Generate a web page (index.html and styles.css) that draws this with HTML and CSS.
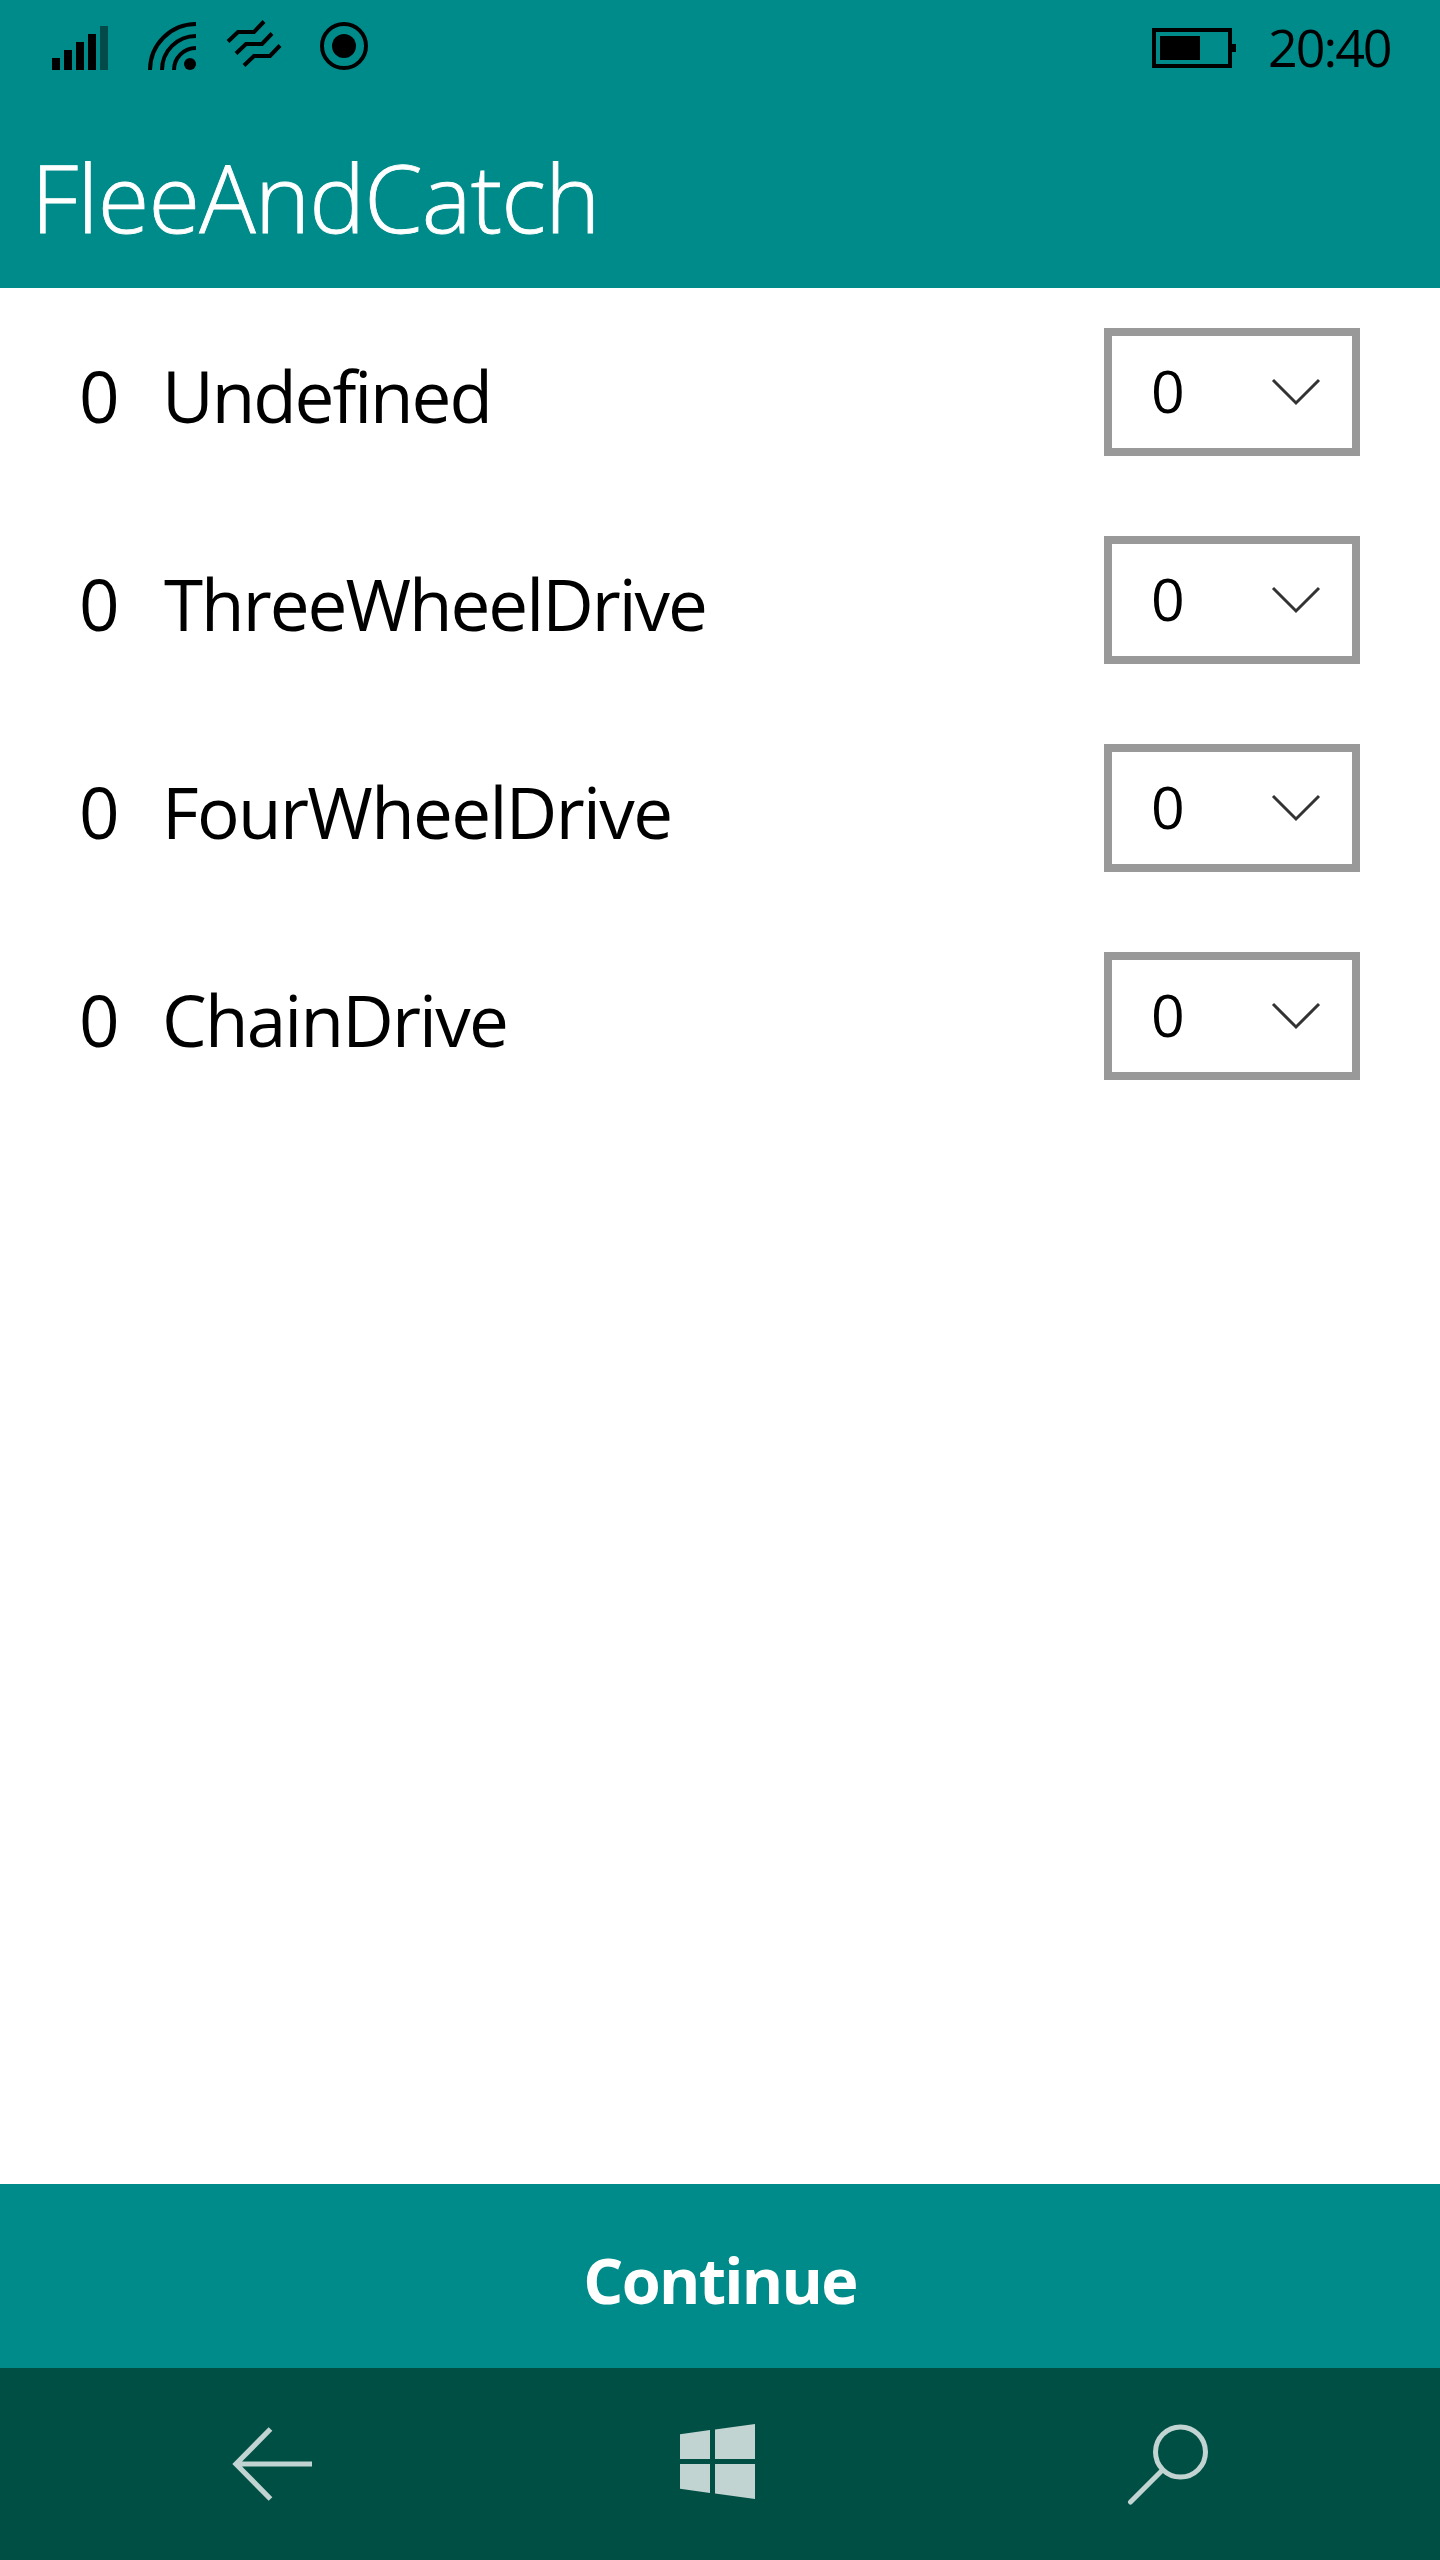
FILE: index.html
```html
<!DOCTYPE html>
<html lang="en">
<head>
<meta charset="utf-8">
<title>FleeAndCatch</title>
<link rel="stylesheet" href="styles.css">
</head>
<body>
<div class="screen">
  <header class="header">
    <div class="status">
      <svg class="signal" width="56" height="44" viewBox="0 0 56 44"><path d="M0 32h8v12H0zM12 24h8v20h-8zM24 16h8v28h-8zM36 8h8v36h-8z"/><path class="dim" d="M48 0h8v44h-8z"/></svg>
      <svg class="wifi" width="48" height="48" viewBox="0 0 48 48"><path class="line" d="M2 48A46 46 0 0 1 48 2M14 48A34 34 0 0 1 48 14M26 48A22 22 0 0 1 48 26"/><circle cx="42" cy="42" r="6"/></svg>
      <svg class="vibrate" width="56" height="48" viewBox="0 0 56 48"><path class="line" d="M2 20.500L12 11H28L38 0.500M10 32.500L20 23H36L46 12.500M18 44.500L28 35H44L54 24.500"/></svg>
      <svg class="record" width="48" height="48" viewBox="0 0 48 48"><circle class="line" cx="24" cy="24" r="22"/><circle cx="24" cy="24" r="12"/></svg>
      <svg class="battery" width="84" height="40" viewBox="0 0 84 40"><path class="line" d="M2 2h76v36H2z"/><path d="M8 8h40v24H8zM80 16h4v8h-4z"/></svg>
      <span class="clock">20:40</span>
    </div>
    <h1 class="title">FleeAndCatch</h1>
  </header>
  <main class="list">
    <div class="row"><span class="count">0</span><span class="name">Undefined</span><button class="select"><span>0</span><svg width="50" height="30" viewBox="0 0 50 30"><path d="M2 2L25 25L48 2"/></svg></button></div>
    <div class="row"><span class="count">0</span><span class="name three">ThreeWheelDrive</span><button class="select"><span>0</span><svg width="50" height="30" viewBox="0 0 50 30"><path d="M2 2L25 25L48 2"/></svg></button></div>
    <div class="row"><span class="count">0</span><span class="name four">FourWheelDrive</span><button class="select"><span>0</span><svg width="50" height="30" viewBox="0 0 50 30"><path d="M2 2L25 25L48 2"/></svg></button></div>
    <div class="row"><span class="count">0</span><span class="name chain">ChainDrive</span><button class="select"><span>0</span><svg width="50" height="30" viewBox="0 0 50 30"><path d="M2 2L25 25L48 2"/></svg></button></div>
  </main>
  <button class="continue">Continue</button>
  <nav class="nav">
    <svg class="back" width="80" height="80" viewBox="0 0 80 80"><path d="M80 40H5M38.500 5L4 40L38.500 75"/></svg>
    <svg class="home" width="75" height="76" viewBox="0 0 75 76"><path d="M0 10.300L30 6V35H0zM35 5.500L75 0V35H35zM0 40H30V69L0 64.700zM35 40H75V75L35 69.500z"/></svg>
    <svg class="search" width="82" height="82" viewBox="0 0 82 82"><circle cx="53.500" cy="28" r="25"/><path d="M35.500 46L3.500 78"/></svg>
  </nav>
</div>
</body>
</html>
```
FILE: styles.css
```css
* { box-sizing: border-box; }
body { margin: 0; font-family: "Open Sans", "Noto Sans", sans-serif; background: #fff; color: #000; }
svg { display: block; flex: none; }
button { margin: 0; border: 0; border-radius: 0; font-family: inherit; color: inherit; }

.screen { display: flex; flex-direction: column; width: 1440px; height: 2560px; }

.header { height: 288px; background: #008b8b; }
.status { display: flex; align-items: flex-start; height: 133px; padding-left: 52px; }
.status .line { fill: none; stroke: #000; stroke-width: 4; }
.status .dim { fill: #044a4a; }
.signal { margin-top: 26px; }
.wifi { margin: 22px 0 0 40px; }
.vibrate { margin: 21px 0 0 30px; overflow: visible; }
.record { margin: 22px 0 0 38px; }
.battery { margin: 28px 0 0 784px; }
.clock { margin: 11px 0 0 32px; font-size: 52px; line-height: 71px; letter-spacing: -2px; }
.title { margin: 0; padding-left: 31px; font-size: 94px; font-weight: 300; line-height: 128px; letter-spacing: -0.9px; color: #fff; -webkit-text-stroke: 0.8px #fff; }

.list { flex: 1; }
.row { display: flex; align-items: flex-start; height: 208px; padding: 40px 80px 0 79px; font-size: 71px; line-height: 97px; }
.count { width: 83px; margin-top: 19px; }
.name { flex: 1; margin-top: 19px; letter-spacing: -2.05px; }
.three { padding-left: 2px; letter-spacing: -2px; }
.four { letter-spacing: -1.65px; }
.chain { letter-spacing: -1.8px; }
.select { display: flex; align-items: center; justify-content: space-between; width: 256px; height: 128px; padding: 0 31px 4px 39px; border: 8px solid #999; background: #fff; font-size: 59px; line-height: 80px; }
.select svg { margin-top: 5px; }
.select path { fill: none; stroke: #333; stroke-width: 3; }

.continue { height: 184px; padding: 7px 0 0; background: #008b8b; color: #fff; font-size: 63px; font-weight: 700; letter-spacing: -1.7px; }

.nav { display: flex; height: 192px; padding-left: 232px; background: #004f44; }
.nav svg { fill: none; stroke: #c1d4d1; stroke-width: 5.2; }
.back { margin-top: 56px; }
.nav .home { margin: 56px 0 0 368px; fill: #c1d4d1; stroke: none; }
.nav .search { margin: 55.5px 0 0 372px; stroke-width: 5; stroke-linecap: round; }
```
